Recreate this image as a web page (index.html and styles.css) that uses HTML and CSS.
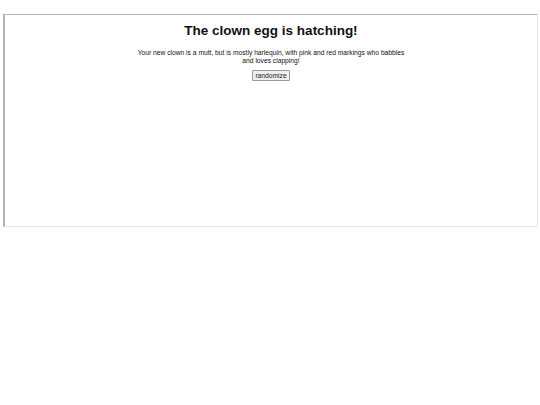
FILE: index.html
```html
<!DOCTYPE html>
<html>
<head>
<meta charset="utf-8">
<link rel="stylesheet" href="styles.css">
</head>
<body>
<div class="frame">
  <div class="content">
    <h1 class="title">The clown egg is hatching!</h1>
    <p class="desc">Your new clown is a mutt, but is mostly harlequin, with pink and red markings who babbles and loves clapping!</p>
    <button class="btn">randomize</button>
  </div>
</div>
</body>
</html>
```
FILE: styles.css
```css
html, body {
  margin: 0;
  padding: 0;
  background: #fff;
}
.frame {
  margin: 14px 0 0 3px;
  width: 535px;
  height: 213px;
  box-sizing: border-box;
  border-style: solid;
  border-width: 1px 1px 1px 2px;
  border-color: #b4b4b4 #e6e6e6 #e6e6e6 #b4b4b4;
}
.content {
  display: flex;
  flex-direction: column;
  align-items: center;
  padding-top: 8px;
  font-family: "Liberation Sans", Arial, sans-serif;
  color: #111;
}
.title {
  font-size: 13.5px;
  line-height: 16px;
  font-weight: bold;
  margin: 0;
}
.desc {
  font-size: 6.7px;
  line-height: 8px;
  text-align: center;
  width: 274px;
  margin: 10px 0 5px 0;
}
.btn {
  font-family: "Liberation Sans", Arial, sans-serif;
  font-size: 6.7px;
  line-height: 8px;
  padding: 1px 2px 0 2px;
  background: #efefef;
  border: 1px solid #9a9a9a;
  border-radius: 1px;
  color: #222;
  margin: 0;
}
```
